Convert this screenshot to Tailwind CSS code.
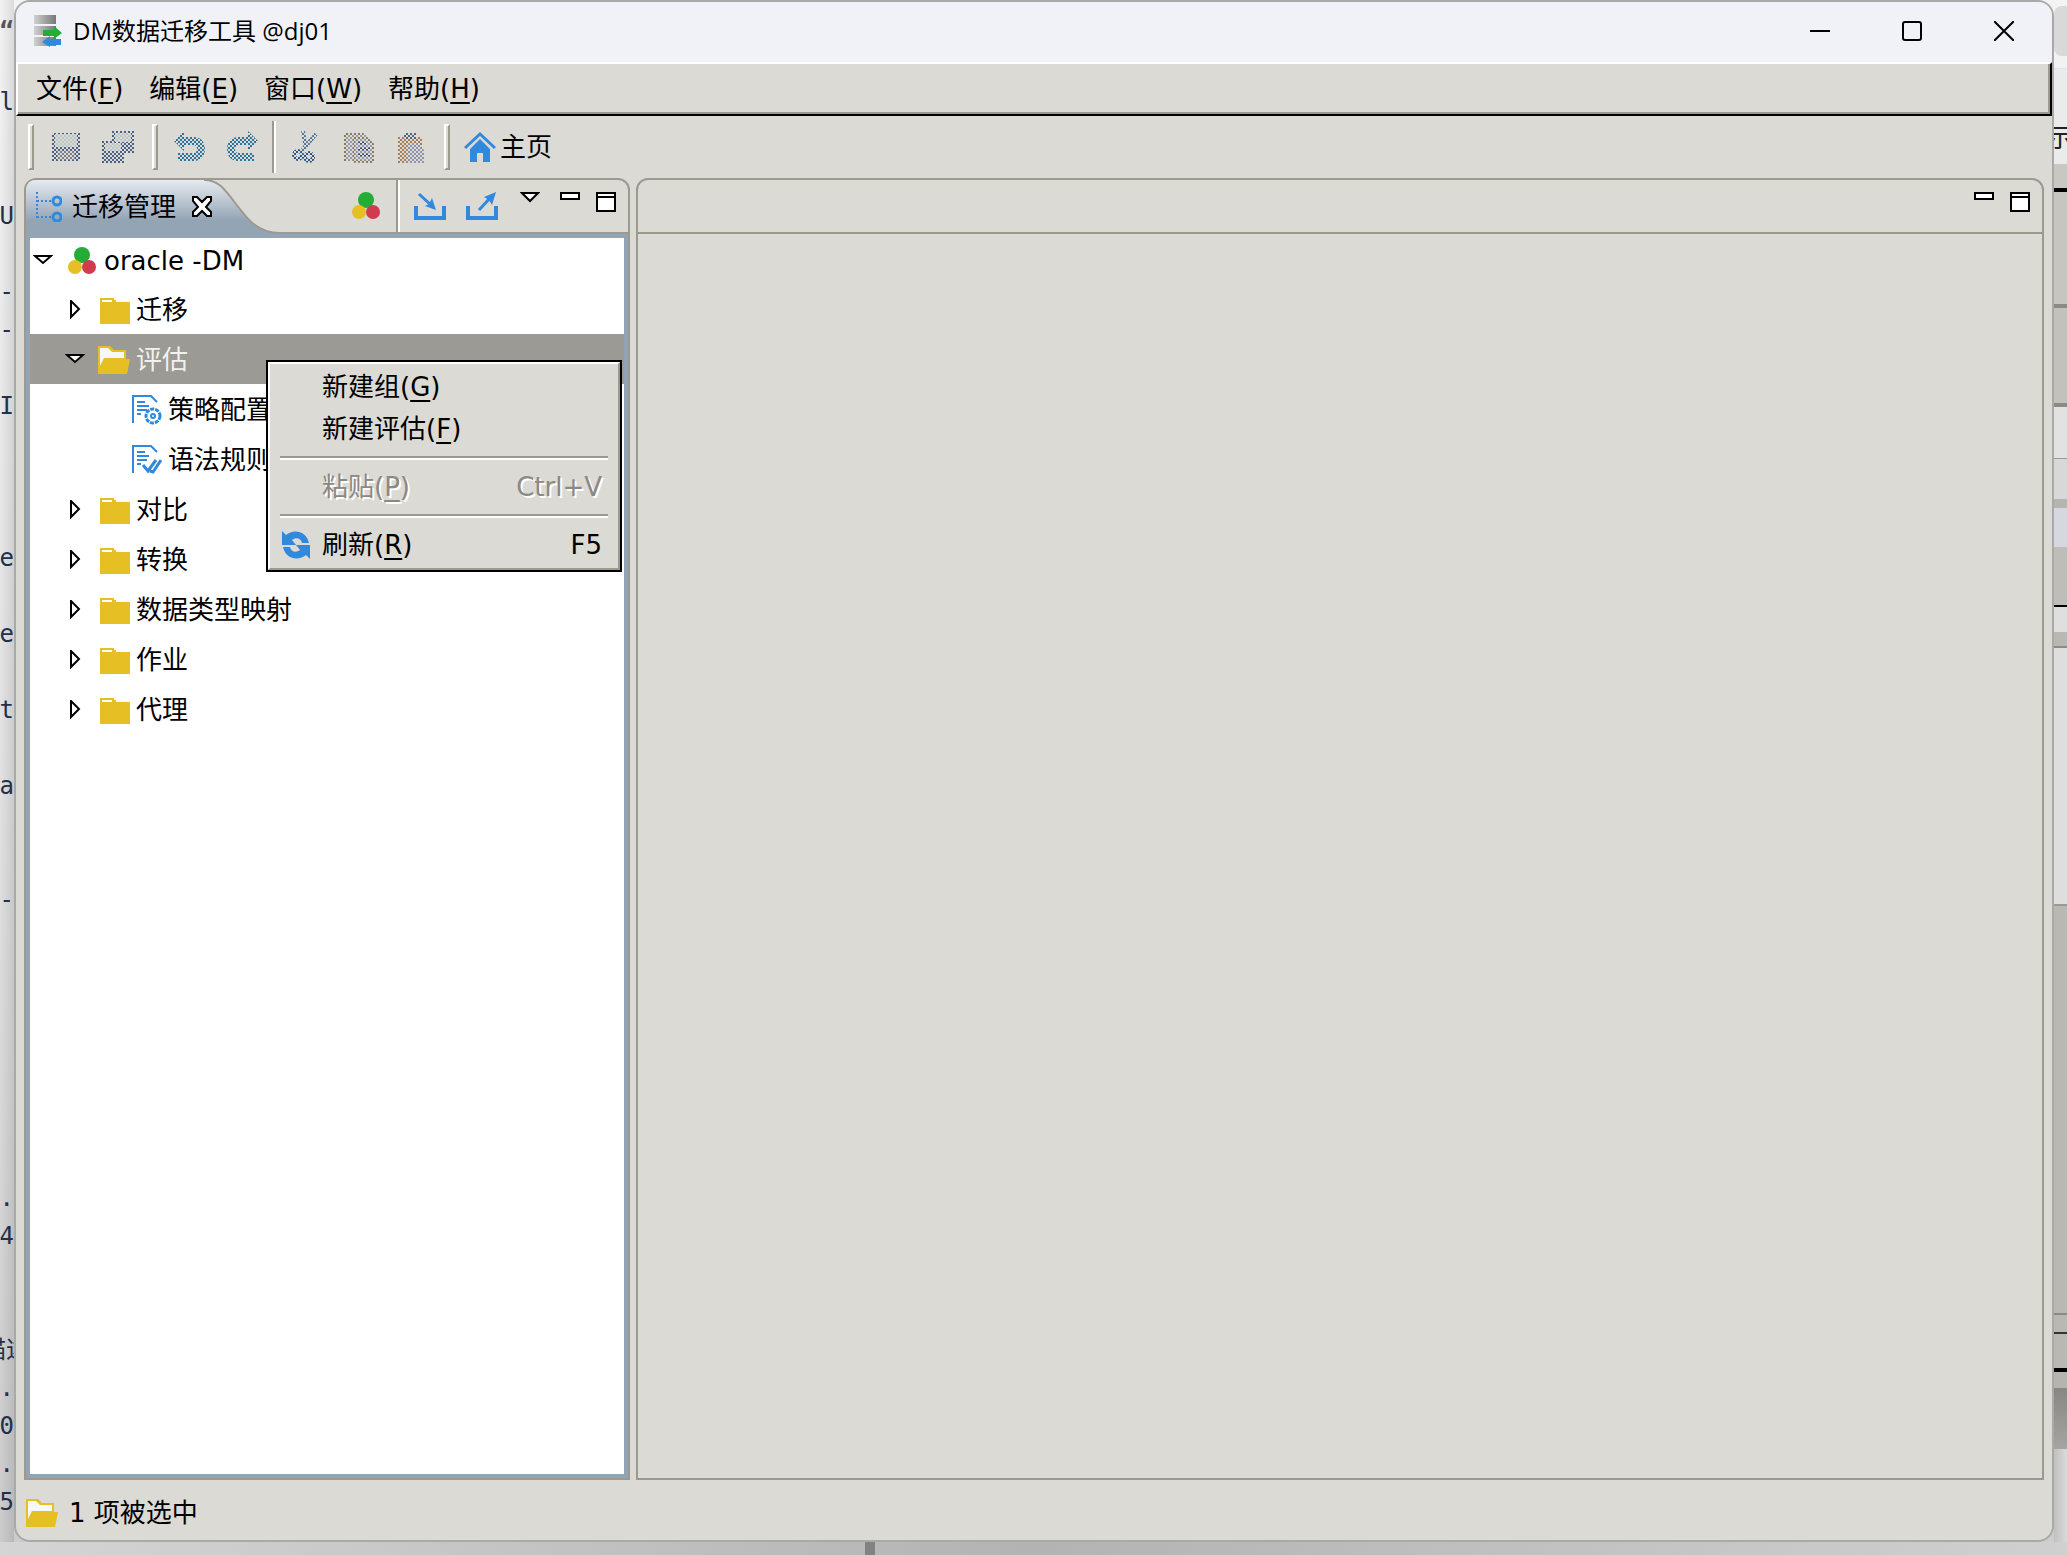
<!DOCTYPE html>
<html lang="zh-CN">
<head>
  <meta charset="UTF-8">
  <meta name="viewport" content="width=device-width, initial-scale=1.0">
  <title>DM数据迁移工具 @dj01</title>
  <script src="https://cdn.jsdelivr.net/npm/@tailwindcss/browser@4"></script>
</head>
<body class="h-screen flex flex-col overflow-hidden bg-linear-to-b from-[#f3f3f3] via-[#e2e2e2] to-[#cccccc] text-black text-[26px] leading-[42px] font-['DejaVu_Sans','Noto_Sans_CJK_SC',sans-serif]">

<!-- shared icons -->
<svg class="absolute size-0">
  <defs>
    <pattern id="dither" width="4" height="4" patternUnits="userSpaceOnUse">
      <path d="M0 0h2v2H0zM2 2h2v2H2z" fill="#dbdad5"/>
    </pattern>
    <linearGradient id="disk"><stop offset="0" stop-color="#d0d0d0"/><stop offset="1" stop-color="#777"/></linearGradient>
    <linearGradient id="tab" x2="0" y2="1"><stop offset="0" stop-color="#e6eaf1"/><stop offset=".75" stop-color="#93a4b4"/></linearGradient>
    <symbol id="balls" viewBox="0 0 28 28">
      <circle cx="14" cy="8" r="8" fill="#23ad37"/>
      <circle cx="7" cy="20" r="7" fill="#e5bf24"/>
      <circle cx="21" cy="20" r="7" fill="#d03b4d"/>
    </symbol>
    <symbol id="folder" viewBox="0 0 32 28">
      <path d="M2 2h14v2h2v2h14v22H2z" fill="#e5bf24"/>
      <path d="M4 4h10v2H4z" fill="#fff"/>
    </symbol>
    <symbol id="folder-open" viewBox="0 0 32 28">
      <path d="M0 0h12l4 4h12v9h4l-3 15H0z" fill="#e5bf24"/>
      <path d="M2 2h8l4 4h12v6H6l-4 8z" fill="#f5f8f8"/>
    </symbol>
    <symbol id="closed" viewBox="0 0 20 20">
      <path d="M6 1v16l8-8z" fill="#fff" stroke="#000" stroke-width="2"/>
    </symbol>
    <symbol id="opened" viewBox="0 0 20 20">
      <path d="M2 5h16l-8 7z" fill="#fff" stroke="#000" stroke-width="2"/>
    </symbol>
    <symbol id="doc" viewBox="0 0 30 30">
      <path d="M1 28V1h18l6 6M5 7h8M5 11h12M5 15h10M5 19h4" fill="none" stroke="#3089dc" stroke-width="2"/>
    </symbol>
    <symbol id="minimize" viewBox="0 0 20 20">
      <path d="M1 1h18v6H1z" fill="#fff" stroke="#000" stroke-width="2"/>
    </symbol>
    <symbol id="maximize" viewBox="0 0 20 20">
      <path d="M1 1h18v18H1zM1 5h18" fill="#fff" stroke="#000" stroke-width="2"/>
    </symbol>
  </defs>
</svg>

<div class="flex-1 flex min-h-0">

  <!-- page behind, left edge -->
  <div class="w-[14px] shrink-0 overflow-hidden bg-linear-to-r from-transparent to-black/10 text-[#22304a] text-2xl leading-[38px] font-['DejaVu_Sans_Mono','Noto_Sans_CJK_SC',monospace]">
    <div class="h-[83px] flex flex-col items-end pt-3 text-[#555]"><b>“</b></div>
    <div class="flex flex-col items-end whitespace-pre">
      <span>ol</span><span> </span><span> </span><span>U</span><span> </span><span>-</span><span>-</span><span> </span><span>I</span><span> </span><span> </span><span> </span><span>ne</span><span> </span><span>ne</span><span> </span><span>t</span><span> </span><span>a</span><span> </span><span> </span><span>-</span>
    </div>
    <div class="flex flex-col items-end whitespace-pre mt-[260px]">
      <span>t.</span><span>04</span><span> </span><span> </span><span class="w-[32px]">描述</span><span>t.</span><span>10</span><span>t.</span><span>05</span>
    </div>
  </div>

  <!-- WINDOW -->
  <div class="flex-1 min-w-0 flex flex-col overflow-hidden border-2 border-[#a9a9a9] rounded-2xl bg-[#dbdad5]">

    <!-- Title bar -->
    <header class="h-[60px] shrink-0 flex items-center bg-[#f1f2f8] pl-[18px] pr-[38px] pb-[2px]">
      <svg class="w-7 h-8" viewBox="0 0 28 32">
        <path d="M0 0h22v9H0zM0 11h22v9H0zM0 22h22v9H0z" fill="url(#disk)"/>
        <path d="M9 15h11v-4l8 7-8 6v-3H9z" fill="#23ad37"/>
        <path d="M27 24H16v-3l-8 6 8 5v-2h11z" fill="#3089dc"/>
      </svg>
      <h1 class="flex-1 ml-[11px] text-2xl font-['Open_Sans','Noto_Sans_CJK_SC',sans-serif]">DM数据迁移工具 @dj01</h1>
      <div class="flex gap-[72px]">
        <button aria-label="最小化"><svg class="size-5" viewBox="0 0 20 20"><path d="M0 10h20" stroke="#000" stroke-width="2"/></svg></button>
        <button aria-label="最大化"><svg class="size-5" viewBox="0 0 20 20"><rect x="1" y="1" width="18" height="18" rx="2" fill="none" stroke="#000" stroke-width="2"/></svg></button>
        <button aria-label="关闭"><svg class="size-5" viewBox="0 0 20 20"><path d="M0 0l20 20M20 0L0 20" stroke="#000" stroke-width="2"/></svg></button>
      </div>
    </header>

    <!-- Menu bar -->
    <nav class="h-[54px] shrink-0 flex items-center gap-[26px] pl-[18px] border-2 border-t-white border-l-white border-r-black border-b-black shadow-[inset_-2px_-2px_0_#9e998f]">
      <button>文件(<u class="underline-offset-4 decoration-2">F</u>)</button>
      <button>编辑(<u class="underline-offset-4 decoration-2">E</u>)</button>
      <button>窗口(<u class="underline-offset-4 decoration-2">W</u>)</button>
      <button>帮助(<u class="underline-offset-4 decoration-2">H</u>)</button>
    </nav>

    <!-- Tool bar -->
    <div class="h-[62px] shrink-0 flex items-center pl-3">
      <span class="w-[6px] h-[46px] border-2 border-l-white border-t-white border-r-[#9e998f] border-b-[#9e998f]"></span>
      <div class="flex gap-5 ml-4">
        <button disabled aria-label="保存">
          <svg class="size-8" viewBox="0 0 32 32">
            <path d="M2 2h28v28H2z" fill="#4d6186"/><path d="M5 3h22v13H5z" fill="#b9c4c4"/><path d="M7 20h18v9H7z" fill="#7c7f89"/>
            <path d="M0 0h32v32H0z" fill="url(#dither)"/>
          </svg>
        </button>
        <button disabled aria-label="全部保存">
          <svg class="size-8" viewBox="0 0 32 32">
            <path d="M10 0h22v22H22v10H0V10h10z" fill="#4d6186"/><path d="M13 2h16v9H13zM3 12h16v8H3z" fill="#b9c4c4"/>
            <path d="M0 0h32v32H0z" fill="url(#dither)"/>
          </svg>
        </button>
      </div>
      <span class="w-[6px] h-[46px] ml-[18px] border-2 border-l-white border-t-white border-r-[#9e998f] border-b-[#9e998f]"></span>
      <div class="flex gap-5 ml-4">
        <button disabled aria-label="撤销">
          <svg class="size-8" viewBox="0 0 32 32">
            <path d="M0 10L10 0v6h10c7 0 11 5 11 12s-4 12-11 12H4v-8h15c3 0 4-2 4-4s-1-4-4-4h-9v6z" fill="#2d759c"/>
            <path d="M0 0h32v32H0z" fill="url(#dither)"/>
          </svg>
        </button>
        <button disabled aria-label="重做">
          <svg class="size-8" viewBox="0 0 32 32">
            <path d="M32 10L22 0v6H12C5 6 1 11 1 18s4 12 11 12h16v-8H13c-3 0-4-2-4-4s1-4 4-4h9v6z" fill="#2d759c"/>
            <path d="M0 0h32v32H0z" fill="url(#dither)"/>
          </svg>
        </button>
      </div>
      <span class="w-1 h-[52px] ml-[14px] border-l-2 border-r-2 border-l-[#9e998f] border-r-white"></span>
      <div class="flex gap-5 ml-[14px]">
        <button disabled aria-label="剪切">
          <svg class="size-8" viewBox="0 0 32 32">
            <path d="M13 0l3 18M26 3L10 22" stroke="#56789c" stroke-width="4"/>
            <circle cx="8" cy="24" r="4" fill="none" stroke="#2c5a8c" stroke-width="4"/><circle cx="19" cy="26" r="4" fill="none" stroke="#2c5a8c" stroke-width="4"/>
            <path d="M0 0h32v32H0z" fill="url(#dither)"/>
          </svg>
        </button>
        <button disabled aria-label="复制">
          <svg class="size-8" viewBox="0 0 32 32">
            <path d="M2 2h20l10 10v20H12v-2H2z" fill="#9797aa"/><path d="M3 30V3h18M12 30V7h12l7 7v17z" fill="none" stroke="#857b55" stroke-width="2"/><path d="M16 12h8M16 18h12M16 24h12" stroke="#41577f" stroke-width="3"/>
            <path d="M0 0h32v32H0z" fill="url(#dither)"/>
          </svg>
        </button>
        <button disabled aria-label="粘贴">
          <svg class="size-8" viewBox="0 0 32 32">
            <path d="M4 6h24v26H4z" fill="#a87f56"/><path d="M10 2h12v6H10z" fill="#56647f"/><path d="M13 12h10l7 7v13H13z" fill="#8c94ad"/>
            <path d="M0 0h32v32H0z" fill="url(#dither)"/>
          </svg>
        </button>
      </div>
      <span class="w-[6px] h-[46px] ml-[18px] border-2 border-l-white border-t-white border-r-[#9e998f] border-b-[#9e998f]"></span>
      <button class="flex items-center gap-1 ml-[14px]">
        <svg class="size-8" viewBox="0 0 32 32">
          <path d="M1 17L16 3l15 14" fill="none" stroke="#3089dc" stroke-width="3"/>
          <path d="M16 8l10 10v13h-7v-9h-6v9H6V18z" fill="#3089dc"/>
        </svg>
        主页
      </button>
    </div>

    <!-- Work area -->
    <div class="flex-1 flex gap-[6px] min-h-0 pl-2 pr-2">

      <!-- Migration view -->
      <section class="relative w-[606px] shrink-0 flex flex-col border-2 border-[#9e998f] rounded-t-xl">
        <div class="h-[54px] shrink-0 flex border-b-2 border-[#9e998f]">
          <div class="relative w-[254px] h-[54px]">
            <svg class="absolute inset-0 w-full h-full" viewBox="0 0 254 54">
              <path d="M0 54V9Q1 0 10 0H178C192 0 198 8 210 24S232 52 254 53V54z" fill="url(#tab)"/>
              <path d="M178 0C192 0 198 8 210 24S232 53 254 53" fill="none" stroke="#9e998f" stroke-width="2"/>
            </svg>
            <div class="relative flex items-center h-[54px] pl-[10px]">
              <svg class="w-[26px] h-[30px]" viewBox="0 0 26 30">
                <path d="M1 0v28M1 9h15M1 25h15" fill="none" stroke="#3089dc" stroke-width="2" stroke-dasharray="2 2"/>
                <circle cx="21" cy="9" r="4" fill="none" stroke="#3089dc" stroke-width="3"/><circle cx="21" cy="25" r="4" fill="none" stroke="#3089dc" stroke-width="3"/>
              </svg>
              <h2 class="ml-[10px]">迁移管理</h2>
              <button class="ml-[15px]" aria-label="关闭视图">
                <svg class="size-[22px]" viewBox="0 0 22 22"><path d="M2 1h4l5 5 5-5h4v4l-5 6 5 5v4h-4l-5-5-5 5H2v-4l5-5-5-6z" fill="#fff" stroke="#000" stroke-width="2"/></svg>
              </button>
            </div>
          </div>
          <div class="flex-1 flex justify-end pr-3">
            <button class="mr-4" aria-label="迁移"><svg class="size-7"><use href="#balls"/></svg></button>
            <span class="w-1 border-l-2 border-r-2 border-l-[#9e998f] border-r-white"></span>
            <button class="ml-[14px]" aria-label="导入">
              <svg class="size-8" viewBox="0 0 32 32">
                <path d="M2 16v12h28V16" fill="none" stroke="#3089dc" stroke-width="4"/>
                <path d="M5 4l12 11" stroke="#3089dc" stroke-width="3"/><path d="M22 20l-11-4 4-2 3-6z" fill="#3089dc"/>
              </svg>
            </button>
            <button class="ml-5" aria-label="导出">
              <svg class="size-8" viewBox="0 0 32 32">
                <path d="M2 16v12h28V16" fill="none" stroke="#3089dc" stroke-width="4"/>
                <path d="M13 20L25 7" stroke="#3089dc" stroke-width="3"/><path d="M30 2l-4 13-3-5-5-3z" fill="#3089dc"/>
              </svg>
            </button>
            <div class="flex items-start pt-3 ml-[22px]">
              <button aria-label="视图菜单"><svg class="w-5 h-[11px]" viewBox="0 0 20 11"><path d="M2 1h16l-8 8z" fill="#fff" stroke="#000" stroke-width="2"/></svg></button>
              <button class="ml-5" aria-label="最小化视图"><svg class="size-5"><use href="#minimize"/></svg></button>
              <button class="ml-4" aria-label="最大化视图"><svg class="size-5"><use href="#maximize"/></svg></button>
            </div>
          </div>
        </div>

        <!-- Tree -->
        <div class="flex-1 min-h-0 border-4 border-[#93a4b4] bg-white overflow-hidden">
          <ul>
            <li class="h-[46px] flex items-center pl-[3px]"><svg class="size-5"><use href="#opened"/></svg><svg class="size-7 ml-[15px] mr-2"><use href="#balls"/></svg>oracle -DM</li>
            <li class="h-[50px] flex items-center pt-[2px] pl-[35px]"><svg class="size-5"><use href="#closed"/></svg><svg class="w-8 h-7 ml-[13px] mr-[6px]"><use href="#folder"/></svg>迁移</li>
            <li class="h-[50px] flex items-center pt-[2px] pl-[35px] bg-[#9c9a94] text-[#f2f1ef]"><svg class="size-5"><use href="#opened"/></svg><svg class="w-8 h-7 ml-[13px] mr-[6px]"><use href="#folder-open"/></svg>评估</li>
            <li class="h-[50px] flex items-center pt-[2px] pl-[102px] whitespace-nowrap">
              <svg class="size-[30px] mr-[6px]" viewBox="0 0 30 30">
                <use href="#doc"/>
                <circle cx="21" cy="21" r="7" fill="#fff" stroke="#3089dc" stroke-width="3" stroke-dasharray="4 1"/><circle cx="21" cy="21" r="2" fill="none" stroke="#3089dc" stroke-width="2"/>
              </svg>策略配置</li>
            <li class="h-[50px] flex items-center pt-[2px] pl-[102px] whitespace-nowrap">
              <svg class="size-[30px] mr-[6px]" viewBox="0 0 30 30">
                <use href="#doc"/>
                <path d="M11 20l5 6 8-11M18 26l3 1 8-12" fill="none" stroke="#3089dc" stroke-width="3"/>
              </svg>语法规则</li>
            <li class="h-[50px] flex items-center pt-[2px] pl-[35px]"><svg class="size-5"><use href="#closed"/></svg><svg class="w-8 h-7 ml-[13px] mr-[6px]"><use href="#folder"/></svg>对比</li>
            <li class="h-[50px] flex items-center pt-[2px] pl-[35px]"><svg class="size-5"><use href="#closed"/></svg><svg class="w-8 h-7 ml-[13px] mr-[6px]"><use href="#folder"/></svg>转换</li>
            <li class="h-[50px] flex items-center pt-[2px] pl-[35px]"><svg class="size-5"><use href="#closed"/></svg><svg class="w-8 h-7 ml-[13px] mr-[6px]"><use href="#folder"/></svg>数据类型映射</li>
            <li class="h-[50px] flex items-center pt-[2px] pl-[35px]"><svg class="size-5"><use href="#closed"/></svg><svg class="w-8 h-7 ml-[13px] mr-[6px]"><use href="#folder"/></svg>作业</li>
            <li class="h-[50px] flex items-center pt-[2px] pl-[35px]"><svg class="size-5"><use href="#closed"/></svg><svg class="w-8 h-7 ml-[13px] mr-[6px]"><use href="#folder"/></svg>代理</li>
          </ul>
        </div>

        <!-- Context menu -->
        <div class="absolute left-[240px] top-[180px] w-[356px] border-2 border-black bg-[#dbdad5]">
          <div class="flex flex-col py-[2px] border-2 border-t-white border-l-white border-r-[#9e998f] border-b-[#9e998f]">
            <button class="flex pl-[52px]">新建组(<u class="underline-offset-4 decoration-2">G</u>)</button>
            <button class="flex pl-[52px]">新建评估(<u class="underline-offset-4 decoration-2">F</u>)</button>
            <hr class="h-1 my-[6px] mx-[10px] border-t-2 border-b-2 border-t-[#9e998f] border-b-white">
            <button disabled class="flex pl-[52px] pr-4 text-[#8c8984] [text-shadow:2px_2px_0_#fff]">粘贴(<u class="underline-offset-4 decoration-2">P</u>)<span class="ml-auto">Ctrl+V</span></button>
            <hr class="h-1 my-[6px] mx-[10px] border-t-2 border-b-2 border-t-[#9e998f] border-b-white">
            <button class="flex items-center pl-3 pr-4">
              <svg class="size-7 mr-3" viewBox="0 0 28 28">
                <path d="M0 0l4 4C11-2 24-1 27 12h-7C19 7 14 6 10 9l4 5H0z" fill="#3089dc"/>
                <path d="M28 28l-4-4C17 30 4 29 1 16h7c1 5 6 6 10 3l-4-5h14z" fill="#3089dc"/>
              </svg>
              刷新(<u class="underline-offset-4 decoration-2">R</u>)<span class="ml-auto">F5</span>
            </button>
          </div>
        </div>
      </section>

      <!-- Editor area -->
      <section class="flex-1 border-2 border-[#9e998f] rounded-t-xl">
        <div class="h-[54px] flex justify-end items-start gap-4 pt-3 pr-3 border-b-2 border-[#9e998f]">
          <button aria-label="最小化编辑区"><svg class="size-5"><use href="#minimize"/></svg></button>
          <button aria-label="最大化编辑区"><svg class="size-5"><use href="#maximize"/></svg></button>
        </div>
      </section>
    </div>

    <!-- Status bar -->
    <footer class="h-[60px] shrink-0 flex items-center pl-[10px] pt-[5px]">
      <svg class="w-8 h-7"><use href="#folder-open"/></svg>
      <span class="ml-[11px]">1 项被选中</span>
    </footer>
  </div>

  <!-- windows behind, right edge -->
  <div class="w-[13px] shrink-0 flex flex-col overflow-hidden whitespace-nowrap">
    <div class="h-[50px] mt-[6px] bg-[#d9d9d9] rounded-l-lg"></div>
    <div class="h-[96px] pt-[54px] flex justify-end text-[#222] bg-[#ebebeb] mt-3 border-t border-[#dde3ee] leading-[26px] font-['Noto_Sans_CJK_SC',sans-serif]"><span class="w-5">示</span></div>
    <div class="h-6 bg-[#c8c7c2]"></div>
    <div class="h-[116px] bg-[#c6c5c0] border-t-4 border-black"></div>
    <div class="h-[103px] bg-[#c2c1bb] border-t-4 border-b-4 border-[#8c8a84]"></div>
    <div class="h-[51px] bg-[#e2e2e2]"></div>
    <div class="h-[41px] bg-[#d8d8d8] border-t border-[#999]"></div>
    <div class="h-[9px] bg-[#b5b4af]"></div>
    <div class="h-[39px] bg-[#d6d8e0]"></div>
    <div class="h-[60px] bg-[#bebdb8] border-b-2 border-black"></div>
    <div class="h-[25px] bg-[#dfdfdf]"></div>
    <div class="h-[16px] bg-[#b9b8b3] border-b-2 border-[#8c8a84]"></div>
    <div class="h-[256px] bg-[#dedede]"></div>
    <div class="h-[409px] bg-[#b9b8b3] border-t-2 border-[#999]"></div>
    <div class="h-[21px] bg-[#b9b8b3] border-t-2 border-b-2 border-t-[#8c8a84] border-b-[#333]"></div>
    <div class="h-[38px] bg-[#b9b8b3] border-b-4 border-black"></div>
    <div class="h-4 bg-[#b5b4af]"></div>
    <div class="h-[61px] bg-linear-to-b from-[#888782] to-[#a5a4a0]"></div>
    <div class="flex-1 bg-linear-to-r from-[#c0c0c0] to-[#dadada]"></div>
  </div>
</div>

<!-- page behind, bottom edge -->
<div class="h-[13px] shrink-0 bg-linear-to-r from-[#d5d5d5] via-[#b3b3b3] to-[#d0d0d0]">
  <div class="h-full w-[10px] ml-[865px] bg-[#828282]"></div>
</div>

</body>
</html>
